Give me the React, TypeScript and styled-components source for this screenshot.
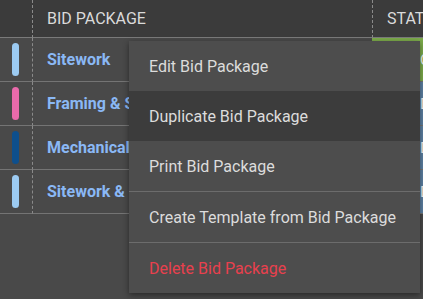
import React from 'react';
import styled, { createGlobalStyle } from 'styled-components';

const GlobalStyle = createGlobalStyle`
  html, body {
    margin: 0;
    padding: 0;
    background: #494949;
    overflow: hidden;
  }
  body {
    font-family: Roboto, "Liberation Sans", sans-serif;
  }
`;

const Page = styled.div`
  position: relative;
  width: 423px;
  height: 299px;
  overflow: hidden;
  background: #494949;
`;

const Table = styled.div`
  display: grid;
  grid-template-columns: 32px 340px 160px;
  width: 532px;
`;

const HeadCell = styled.div<{ $dashed?: boolean }>`
  height: 38px;
  background: #3b3b3b;
  border-bottom: 1px solid #7a7a7a;
  border-left: ${(p) => (p.$dashed ? '1px dashed #8a8a8a' : 'none')};
  display: flex;
  align-items: center;
  padding-left: 14px;
  box-sizing: border-box;
  color: #dadada;
  font-size: 16px;
  white-space: nowrap;
  overflow: hidden;

  &:first-child {
    padding-left: 0;
  }
`;

const Cell = styled.div`
  height: 44px;
  border-bottom: 1px solid #747474;
  box-sizing: border-box;
  display: flex;
  align-items: center;
  white-space: nowrap;
  overflow: hidden;
`;

const ColorCell = styled(Cell)`
  padding-left: 12px;
`;

const ColorBar = styled.div<{ $color: string }>`
  width: 7px;
  height: 33px;
  border-radius: 4px;
  background: ${(p) => p.$color};
`;

const NameCell = styled(Cell)`
  border-left: 1px dashed #8a8a8a;
  padding-left: 14px;
  color: #8ab8f5;
  font-weight: 700;
  font-size: 16px;
`;

const StatusCell = styled(Cell)<{ $bg: string }>`
  background: ${(p) => p.$bg};
  padding-left: 48px;
  color: #f2f2f2;
  font-size: 15px;
`;

const Menu = styled.div`
  position: absolute;
  left: 129px;
  top: 41px;
  width: 291px;
  background: #4d4d4d;
  box-shadow: 0 2px 6px rgba(0, 0, 0, 0.45);
  display: flex;
  flex-direction: column;
`;

const MenuItem = styled.div<{ $active?: boolean; $danger?: boolean; $divider?: boolean }>`
  height: 50px;
  display: flex;
  align-items: center;
  padding-left: 20px;
  font-size: 16px;
  color: ${(p) => (p.$danger ? '#e8404d' : '#dcdcdc')};
  background: ${(p) => (p.$active ? '#3c3c3c' : 'transparent')};
  border-top: ${(p) => (p.$divider ? '1px solid #6c6c6c' : 'none')};
  white-space: nowrap;
`;

const rows = [
  { color: '#9ccbf2', name: 'Sitework', status: 'Open', bg: '#7cab4b' },
  { color: '#e96aab', name: 'Framing & Sheathing', status: 'Draft', bg: '#5d81a3' },
  { color: '#0e4f8c', name: 'Mechanical', status: 'Draft', bg: '#5d81a3' },
  { color: '#9ccbf2', name: 'Sitework & Utilities', status: 'Draft', bg: '#5d81a3' },
];

const App = () => {
  return (
    <Page>
      <GlobalStyle />
      <Table>
        <HeadCell />
        <HeadCell $dashed>BID PACKAGE</HeadCell>
        <HeadCell $dashed>STATUS</HeadCell>
        {rows.map((row, i) => (
          <React.Fragment key={i}>
            <ColorCell>
              <ColorBar $color={row.color} />
            </ColorCell>
            <NameCell>{row.name}</NameCell>
            <StatusCell $bg={row.bg}>{row.status}</StatusCell>
          </React.Fragment>
        ))}
      </Table>

      <Menu>
        <MenuItem>Edit Bid Package</MenuItem>
        <MenuItem $active>Duplicate Bid Package</MenuItem>
        <MenuItem>Print Bid Package</MenuItem>
        <MenuItem $divider>Create Template from Bid Package</MenuItem>
        <MenuItem $divider $danger>
          Delete Bid Package
        </MenuItem>
      </Menu>
    </Page>
  );
};

export default App;
